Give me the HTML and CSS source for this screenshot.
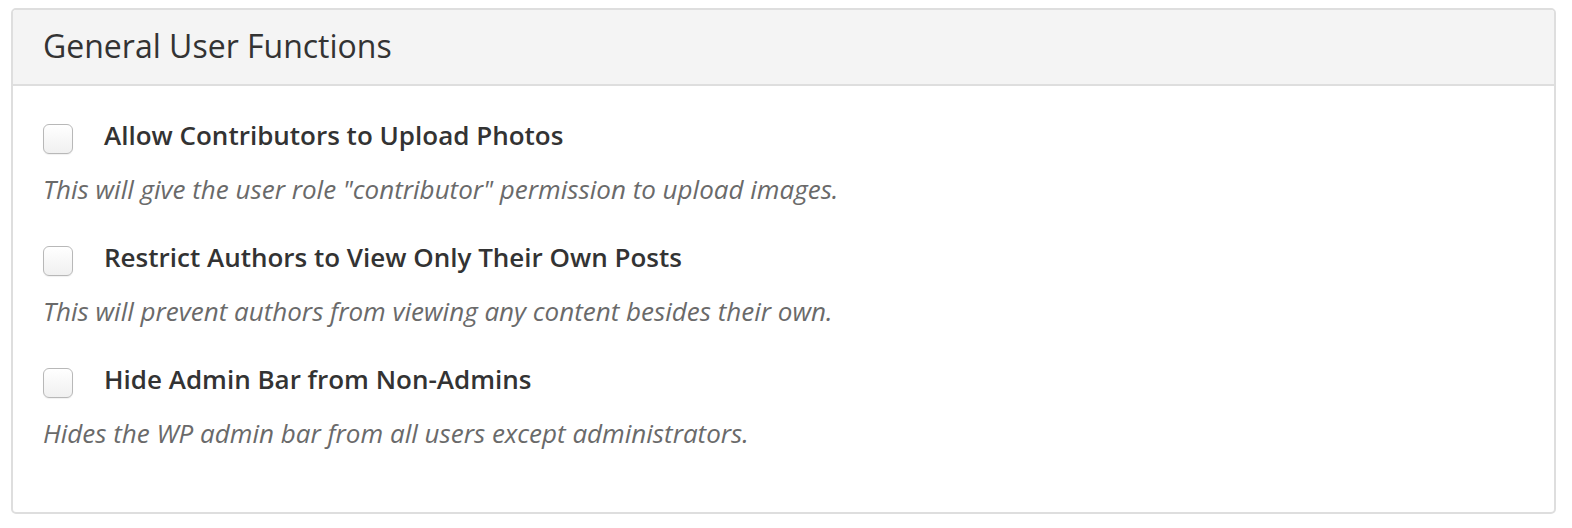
FILE: index.html
```html
<!DOCTYPE html>
<html>
<head>
<meta charset="utf-8">
<link rel="stylesheet" href="styles.css">
</head>
<body>
<div class="page">
  <section class="panel">
    <header class="panel-head">
      <h2 class="panel-title">General User Functions</h2>
    </header>
    <div class="panel-body">
      <div class="option">
        <label class="option-label"><span class="check"></span><span class="option-name">Allow Contributors to Upload Photos</span></label>
        <p class="option-desc">This will give the user role "contributor" permission to upload images.</p>
      </div>
      <div class="option">
        <label class="option-label"><span class="check"></span><span class="option-name">Restrict Authors to View Only Their Own Posts</span></label>
        <p class="option-desc">This will prevent authors from viewing any content besides their own.</p>
      </div>
      <div class="option">
        <label class="option-label"><span class="check"></span><span class="option-name">Hide Admin Bar from Non-Admins</span></label>
        <p class="option-desc">Hides the WP admin bar from all users except administrators.</p>
      </div>
    </div>
  </section>
</div>
</body>
</html>
```
FILE: styles.css
```css
html, body {
  margin: 0;
  padding: 0;
  background: #fff;
}
body {
  font-family: "Open Sans", "Liberation Sans", sans-serif;
  color: #333;
}
.page {
  padding: 8px 16px 16px 11px;
}
.panel {
  border: 2px solid #dedede;
  border-radius: 5px;
  background: #fff;
  overflow: hidden;
}
.panel-head {
  background: #f4f4f4;
  border-bottom: 2px solid #dedede;
  height: 76px;
  box-sizing: border-box;
  padding: 20px 0 0 30px;
}
.panel-title {
  margin: 0;
  font-size: 32px;
  font-weight: 400;
  color: #333;
  line-height: 32px;
}
.panel-body {
  padding: 38px 30px 61px 30px;
  display: flex;
  flex-direction: column;
  gap: 39px;
}
.option-label {
  display: flex;
  align-items: flex-start;
  gap: 31px;
}
.check {
  width: 28px;
  height: 28px;
  border: 1px solid #b8b8b8;
  border-radius: 6px;
  background: linear-gradient(#fff, #f0f0f0);
  box-shadow: 0 1px 1px rgba(0, 0, 0, 0.06);
  flex: none;
}
.option-name {
  font-size: 26px;
  font-weight: 600;
  color: #333;
  line-height: 30px;
  margin-top: -4px;
}
.option-desc {
  margin: 17px 0 0 0;
  font-size: 26px;
  font-style: italic;
  color: #6a6a6a;
  line-height: 36px;
}
```
